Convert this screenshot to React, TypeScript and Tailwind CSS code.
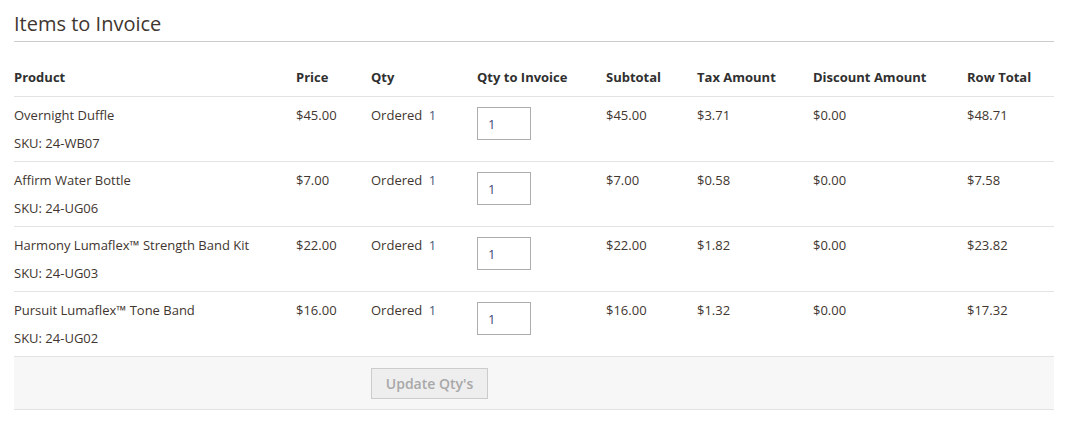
import React from 'react';

interface InvoiceItem {
  name: string;
  sku: string;
  price: string;
  ordered: number;
  subtotal: string;
  tax: string;
  discount: string;
  rowTotal: string;
}

const items: InvoiceItem[] = [
  {
    name: 'Overnight Duffle',
    sku: '24-WB07',
    price: '$45.00',
    ordered: 1,
    subtotal: '$45.00',
    tax: '$3.71',
    discount: '$0.00',
    rowTotal: '$48.71'
  },
  {
    name: 'Affirm Water Bottle',
    sku: '24-UG06',
    price: '$7.00',
    ordered: 1,
    subtotal: '$7.00',
    tax: '$0.58',
    discount: '$0.00',
    rowTotal: '$7.58'
  },
  {
    name: 'Harmony Lumaflex™ Strength Band Kit',
    sku: '24-UG03',
    price: '$22.00',
    ordered: 1,
    subtotal: '$22.00',
    tax: '$1.82',
    discount: '$0.00',
    rowTotal: '$23.82'
  },
  {
    name: 'Pursuit Lumaflex™ Tone Band',
    sku: '24-UG02',
    price: '$16.00',
    ordered: 1,
    subtotal: '$16.00',
    tax: '$1.32',
    discount: '$0.00',
    rowTotal: '$17.32'
  }
];

const headers = [
  { label: 'Product', width: 'w-[282px]' },
  { label: 'Price', width: 'w-[75px]' },
  { label: 'Qty', width: 'w-[106px]' },
  { label: 'Qty to Invoice', width: 'w-[129px]' },
  { label: 'Subtotal', width: 'w-[91px]' },
  { label: 'Tax Amount', width: 'w-[116px]' },
  { label: 'Discount Amount', width: 'w-[154px]' },
  { label: 'Row Total', width: 'w-[87px]' }
];

export default function App() {
  return (
    <div className="min-h-[429px] bg-white px-[14px] pt-[9px] font-['Open_Sans',sans-serif] text-[#41362f]">
      <h2 className="border-b border-[#cccccc] pb-[3px] text-[20px] leading-[29px] font-normal text-[#41362f]">
        Items to Invoice
      </h2>
      <table className="mt-[16px] w-[1040px] table-fixed border-collapse">
        <thead>
          <tr className="border-b border-[#e3e3e3]">
            {headers.map((header) => (
              <th
                key={header.label}
                className={`${header.width} pt-[10px] pb-[10px] text-left text-[13px] leading-[18px] font-bold text-[#303030]`}
              >
                {header.label}
              </th>
            ))}
          </tr>
        </thead>
        <tbody>
          {items.map((item) => (
            <tr key={item.sku} className="h-[65px] border-b border-[#e3e3e3] align-top text-[13px] leading-[18px]">
              <td className="pt-[9px]">
                <div>{item.name}</div>
                <div className="mt-[10px]">SKU: {item.sku}</div>
              </td>
              <td className="pt-[9px]">{item.price}</td>
              <td className="pt-[9px]">
                Ordered <span className="ml-[3px] text-[#4a5a78]">{item.ordered}</span>
              </td>
              <td className="pt-[10px]">
                <input
                  type="text"
                  defaultValue="1"
                  className="block h-[33px] w-[54px] border border-[#adadad] bg-white px-[10px] text-[13px] text-[#3f4a78] outline-none"
                />
              </td>
              <td className="pt-[9px]">{item.subtotal}</td>
              <td className="pt-[9px]">{item.tax}</td>
              <td className="pt-[9px]">{item.discount}</td>
              <td className="pt-[9px]">{item.rowTotal}</td>
            </tr>
          ))}
          <tr className="h-[53px] border-b border-[#e3e3e3] bg-[#f7f7f7] align-top">
            <td colSpan={2} />
            <td colSpan={6} className="pt-[11px]">
              <button
                type="button"
                disabled
                className="h-[31px] w-[117px] border border-[#cccccc] bg-[#eeeeee] text-[14px] font-semibold text-[#a8a8a8]"
              >
                Update Qty's
              </button>
            </td>
          </tr>
        </tbody>
      </table>
    </div>
  );
}
